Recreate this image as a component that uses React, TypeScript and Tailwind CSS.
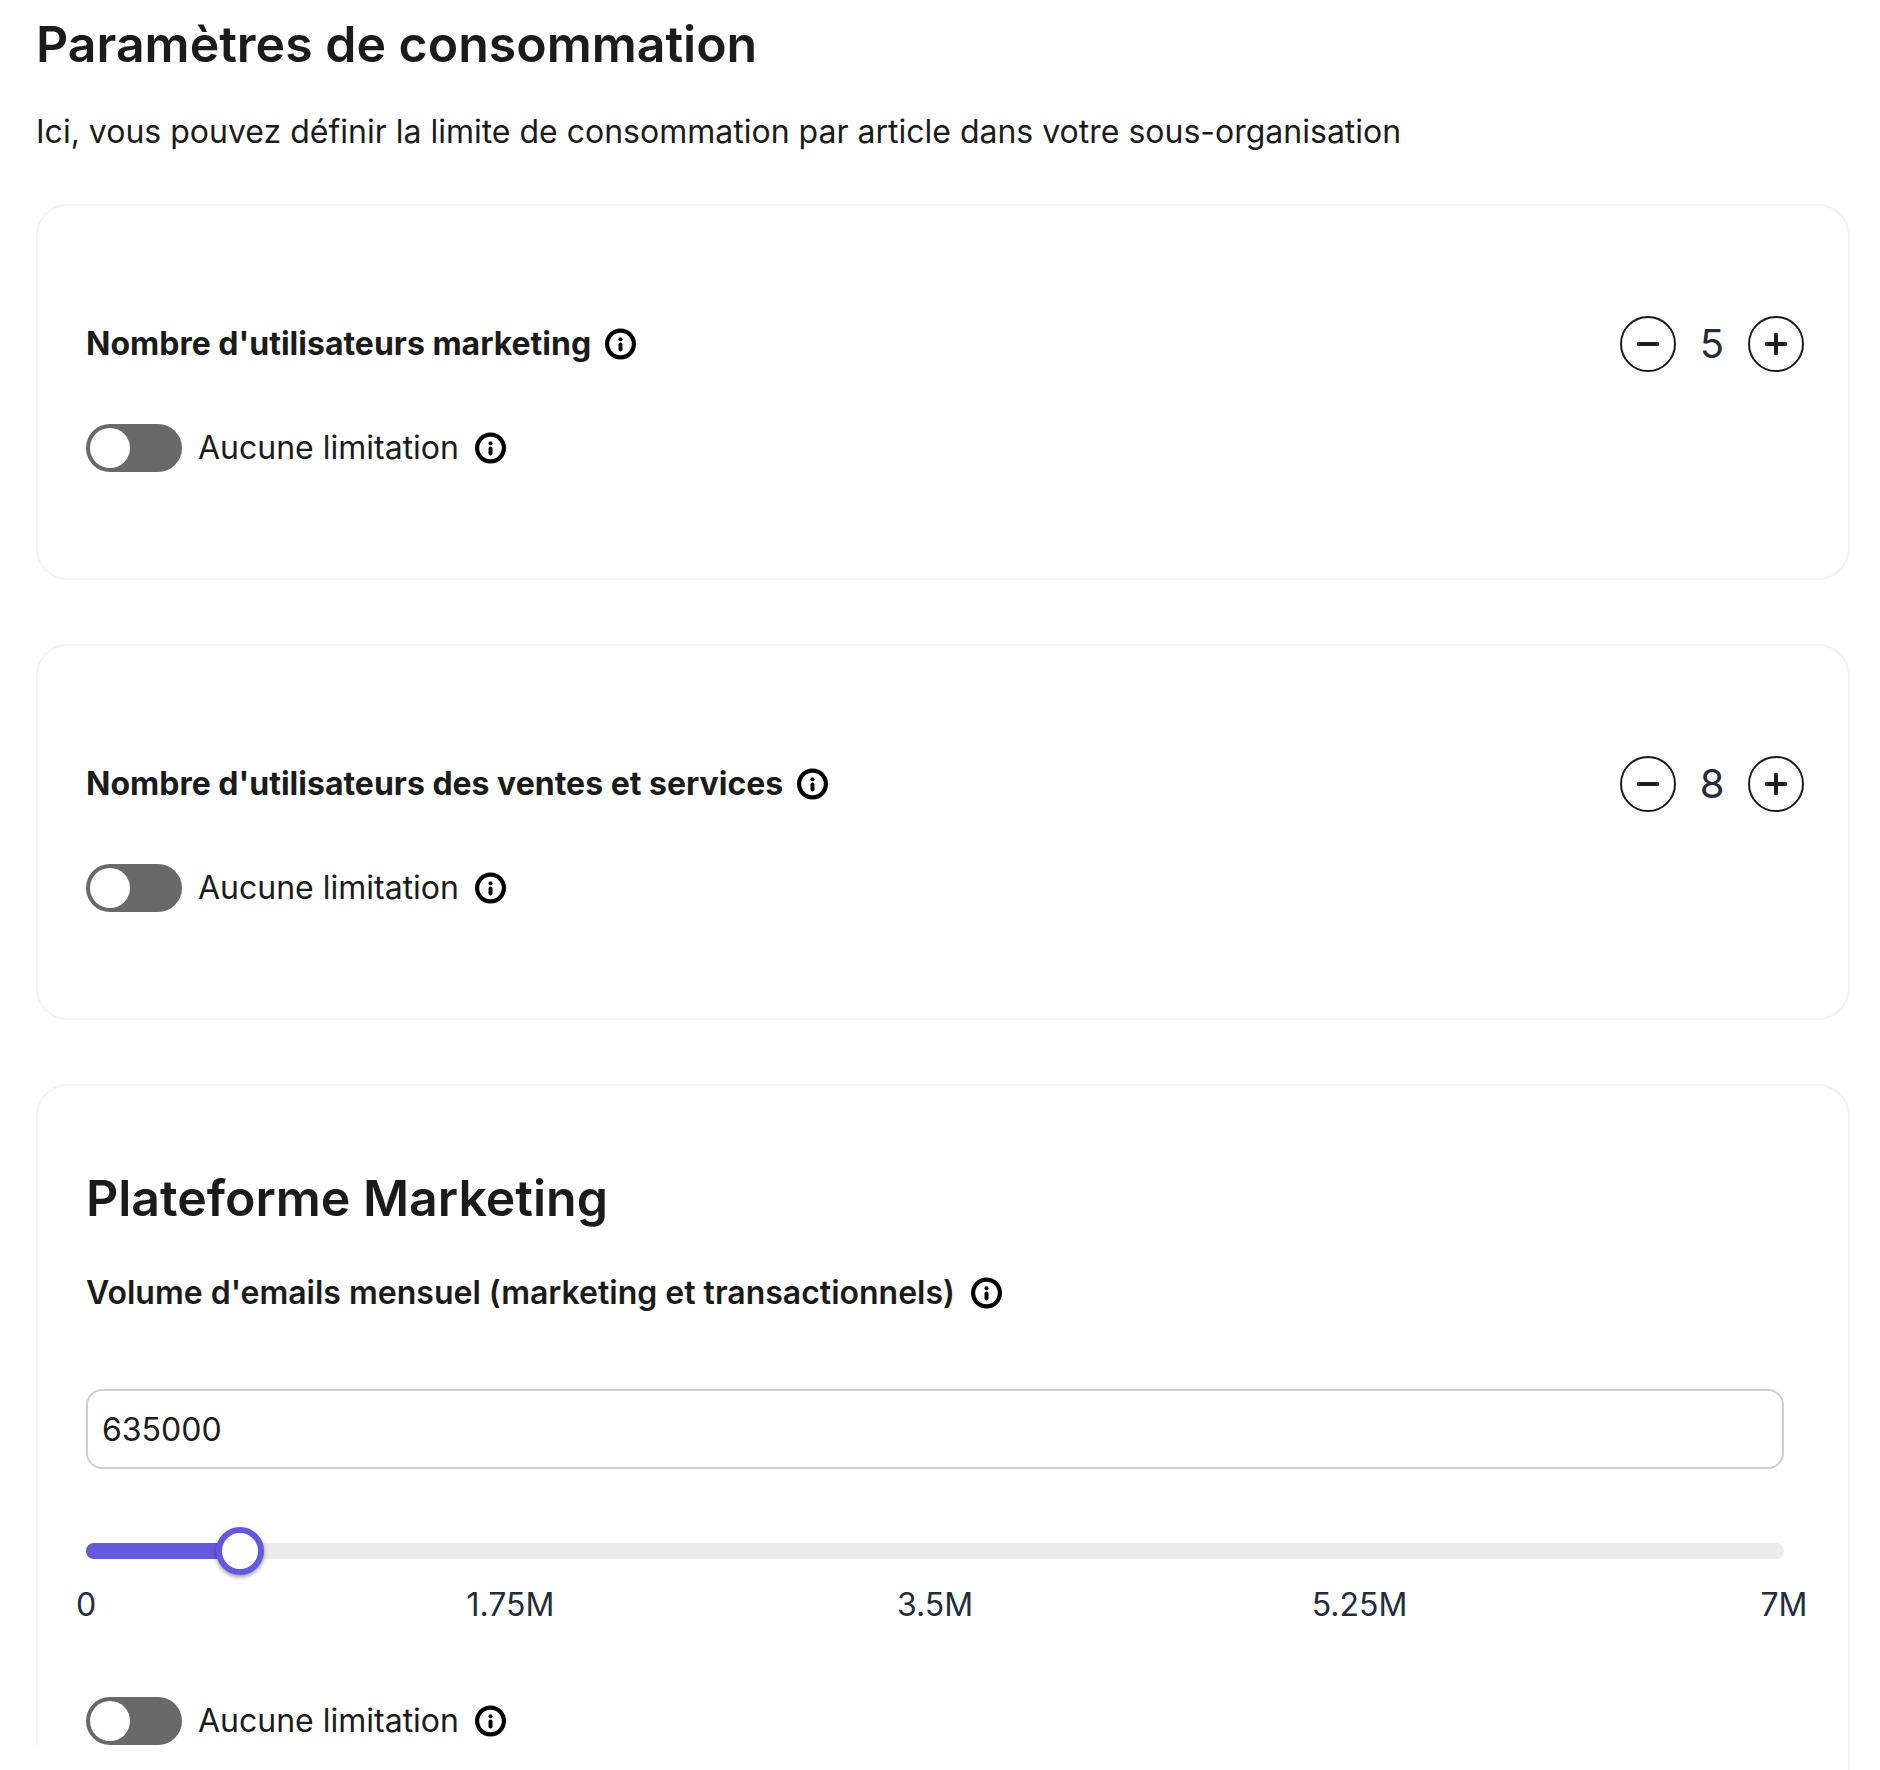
import React, { useId, useState } from 'react';

const MAX_VOLUME = 7000000;

const TICKS = [
  { value: 0, label: '0' },
  { value: 1750000, label: '1.75M' },
  { value: 3500000, label: '3.5M' },
  { value: 5250000, label: '5.25M' },
  { value: 7000000, label: '7M' },
];

const InfoIcon: React.FC = () => (
  <svg viewBox="0 0 32 32" className="h-8 w-8 shrink-0" fill="none" aria-hidden>
    <circle cx="15.5" cy="16" r="13.4" stroke="#000" strokeWidth="4.2" />
    <circle cx="15.5" cy="11.2" r="2" fill="#000" />
    <path d="M15.5 16.6v5" stroke="#000" strokeWidth="4" strokeLinecap="round" />
  </svg>
);

const NoLimitToggle: React.FC = () => {
  const id = useId();
  const [checked, setChecked] = useState(false);

  return (
    <div className="flex items-center gap-4">
      <input
        id={id}
        type="checkbox"
        role="switch"
        checked={checked}
        onChange={(e) => setChecked(e.target.checked)}
        className="flex h-12 w-24 shrink-0 cursor-pointer appearance-none rounded-full bg-[#696969] p-1 before:h-10 before:w-10 before:rounded-full before:bg-white checked:justify-end checked:bg-[#6558dc]"
      />
      <label htmlFor={id} className="cursor-pointer">
        Aucune limitation
      </label>
      <InfoIcon />
    </div>
  );
};

type StepperProps = {
  label: string;
  value: number;
  onChange: (value: number) => void;
};

const Stepper: React.FC<StepperProps> = ({ label, value, onChange }) => (
  <div className="flex items-center" role="group" aria-label={label}>
    <button
      type="button"
      aria-label="Diminuer"
      onClick={() => onChange(Math.max(0, value - 1))}
      className="flex h-14 w-14 cursor-pointer items-center justify-center rounded-full border-2 border-[#1b1b1b]"
    >
      <svg viewBox="0 0 24 24" className="h-6 w-6" stroke="#1b1b1b" strokeWidth="4" strokeLinecap="round" aria-hidden>
        <path d="M2.8 12h18.4" />
      </svg>
    </button>
    <output className="w-18 text-center text-[40px] text-[#1f2d3d]">{value}</output>
    <button
      type="button"
      aria-label="Augmenter"
      onClick={() => onChange(value + 1)}
      className="flex h-14 w-14 cursor-pointer items-center justify-center rounded-full border-2 border-[#1b1b1b]"
    >
      <svg viewBox="0 0 24 24" className="h-6 w-6" stroke="#1b1b1b" strokeWidth="4" strokeLinecap="round" aria-hidden>
        <path d="M2.8 12h18.4M12 2.8v18.4" />
      </svg>
    </button>
  </div>
);

const UserLimitCard: React.FC<{ label: string; initialValue: number }> = ({ label, initialValue }) => {
  const [value, setValue] = useState(initialValue);

  return (
    <section className="rounded-[32px] border-2 border-[#f1f1f6] py-[106px] pr-11 pl-12">
      <div className="flex h-16 items-center justify-between">
        <h3 className="flex items-center gap-3.5 font-bold">
          {label}
          <InfoIcon />
        </h3>
        <Stepper label={label} value={value} onChange={setValue} />
      </div>
      <div className="mt-12">
        <NoLimitToggle />
      </div>
    </section>
  );
};

const EmailVolumeCard: React.FC = () => {
  const [volume, setVolume] = useState(635000);
  const percent = (Math.min(volume, MAX_VOLUME) / MAX_VOLUME) * 100;

  return (
    <section className="rounded-t-[32px] border-2 border-b-0 border-[#f1f1f6] pt-20 pr-16 pl-12">
      <h2 className="text-[50px] leading-[64px] font-semibold">Plateforme Marketing</h2>
      <label htmlFor="volume" className="mt-[43px] flex items-center gap-4 font-semibold">
        Volume d'emails mensuel (marketing et transactionnels)
        <InfoIcon />
      </label>
      <input
        id="volume"
        type="text"
        inputMode="numeric"
        value={volume}
        onChange={(e) => setVolume(Number(e.target.value.replace(/\D/g, '')))}
        className="mt-19 h-20 w-full rounded-2xl border-2 border-[#cfcfcf] px-3.5 outline-none"
      />

      <div className="relative mt-[58px] flex h-12 items-center">
        <div className="h-4 w-full overflow-hidden rounded-full bg-[#ecebe9]">
          <div className="h-full bg-[#6558dc]" style={{ width: `${percent}%` }} />
        </div>
        <div
          className="absolute h-12 w-12 -translate-x-1/2 rounded-full border-6 border-[#6558dc] bg-white shadow-[0_2px_4px_rgba(0,0,0,0.4)]"
          style={{ left: `${percent}%` }}
        />
        <input
          type="range"
          aria-label="Volume d'emails mensuel"
          min={0}
          max={MAX_VOLUME}
          step={5000}
          value={volume}
          onChange={(e) => setVolume(Number(e.target.value))}
          className="absolute inset-0 h-full w-full cursor-pointer opacity-0"
        />
      </div>

      <div className="mt-2.5 flex justify-between text-[#1f2d3d]">
        {TICKS.map((tick) => (
          <span key={tick.value} className="flex w-0 justify-center">
            {tick.label}
          </span>
        ))}
      </div>

      <div className="mt-18">
        <NoLimitToggle />
      </div>
    </section>
  );
};

const App: React.FC = () => (
  <main
    className="bg-white pt-3 pr-[30px] pl-9 text-[32px] leading-[40px] text-[#1b1b1b]"
    style={{ fontFamily: 'Inter, "Liberation Sans", sans-serif' }}
  >
    <h1 className="text-[50px] leading-[64px] font-semibold">Paramètres de consommation</h1>
    <p className="mt-9">
      Ici, vous pouvez définir la limite de consommation par article dans votre sous-organisation
    </p>
    <div className="mt-13 flex flex-col gap-16">
      <UserLimitCard label="Nombre d'utilisateurs marketing" initialValue={5} />
      <UserLimitCard label="Nombre d'utilisateurs des ventes et services" initialValue={8} />
      <EmailVolumeCard />
    </div>
    {/* only the right edge of the card carries on below the last row */}
    <div className="h-[25px] border-r-2 border-[#f1f1f6]" />
  </main>
);

export default App;
